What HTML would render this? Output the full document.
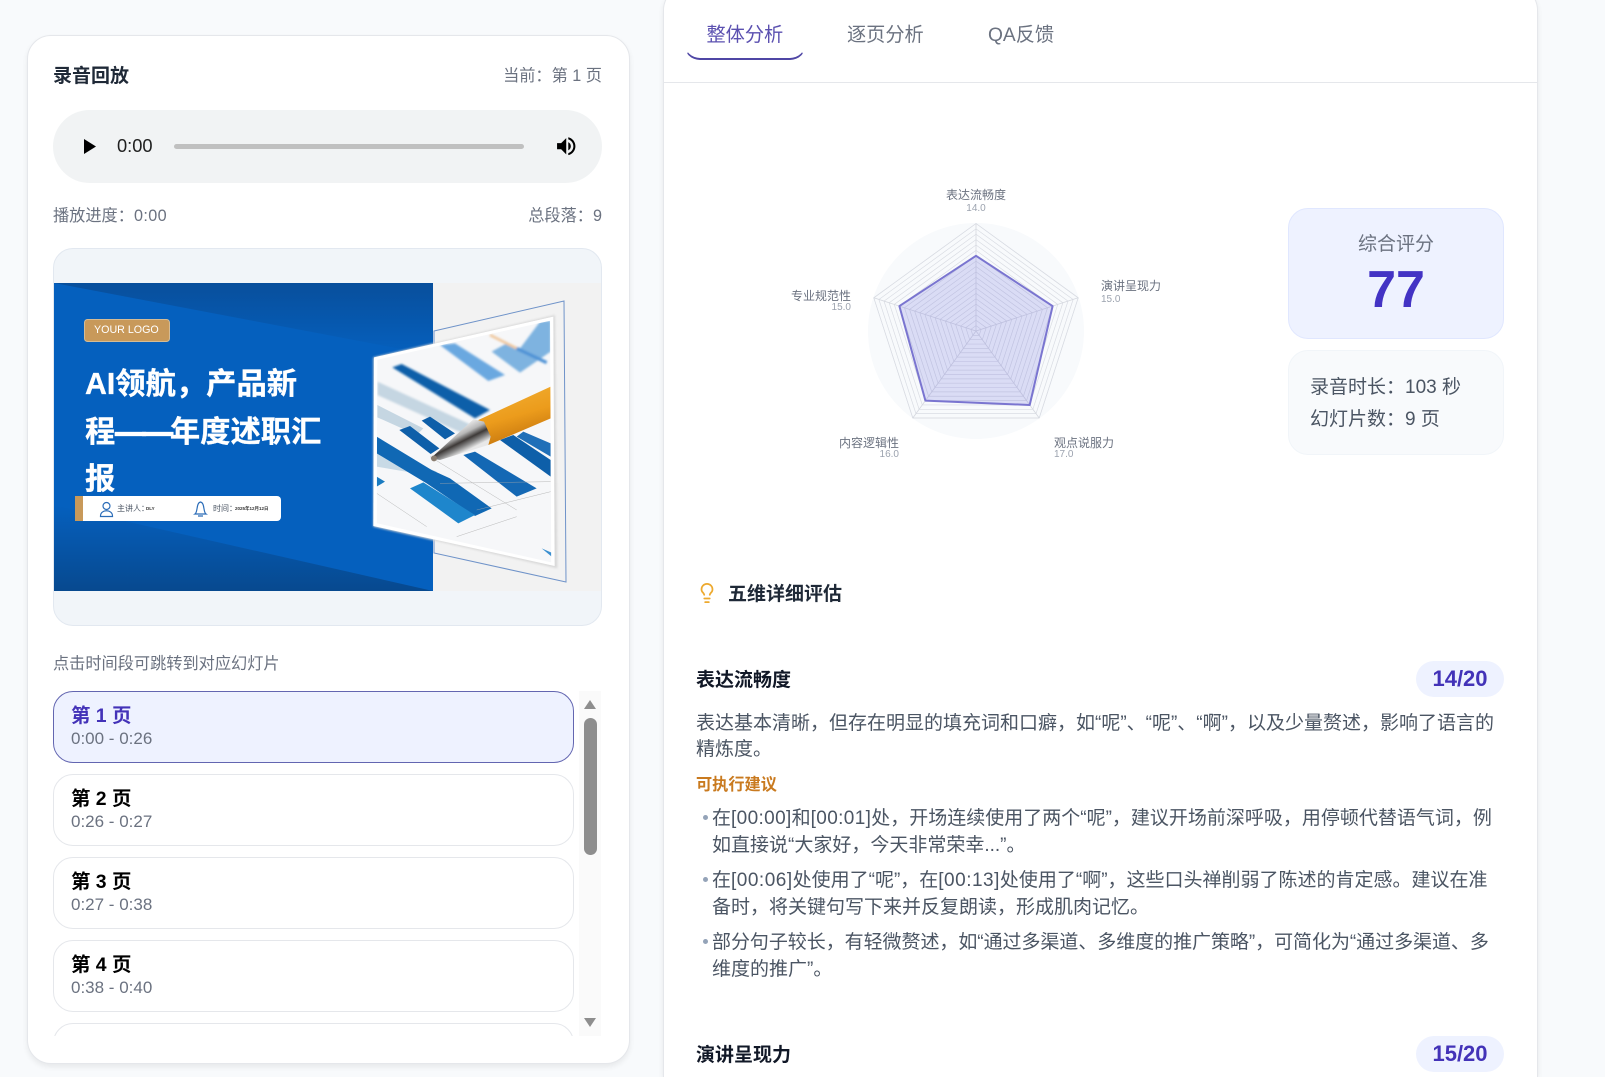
<!DOCTYPE html>
<html lang="zh"><head><meta charset="utf-8"><title>录音分析</title>
<style>
*{box-sizing:border-box}
html,body{margin:0;padding:0;width:1605px;height:1077px;overflow:hidden;background:#f8fafc;font-family:"Liberation Sans","Noto Sans CJK SC",sans-serif}
#root{position:relative;width:1605px;height:1077px;overflow:hidden}
.a{position:absolute}
.t{position:absolute;white-space:nowrap;line-height:24px;height:24px}
.card{position:absolute;background:#fff;border:1px solid #e5e7eb;box-shadow:0 3px 6px rgba(0,0,0,.07)}
.g{color:#6b7280;font-size:16.2px}
.item{position:absolute;left:53px;width:521px;height:72px;border:1px solid #e5e7eb;border-radius:20px;background:#fff}
.item b{position:absolute;left:17px;top:12px;font-size:19.4px;line-height:24px;color:#000;white-space:nowrap}
.item span{position:absolute;left:17px;top:35px;font-size:17px;line-height:24px;color:#6b7280;white-space:nowrap}
.p{font-size:19px;color:#4b5563}
.h{font-size:19px;font-weight:700;color:#111827}
.badge{position:absolute;left:1416px;width:88px;height:36px;border-radius:18px;background:#eef2ff;color:#4333b8;font-weight:700;font-size:22px;line-height:36px;text-align:center}
.dot{position:absolute;left:703px;width:5px;height:5px;border-radius:50%;background:#94a3b8}
</style></head><body><div id="root">

<div class="card" style="left:27px;top:35px;width:603px;height:1029px;border-radius:24px"></div>
<div class="t" style="left:53px;top:65px;font-size:19px;font-weight:700;color:#1f2937">录音回放</div>
<div class="t g" style="right:1003px;top:64px">当前&#xFF1A;第 1 页</div>

<div class="a" style="left:53px;top:110px;width:549px;height:73px;border-radius:37px;background:#f1f3f4"></div>
<svg class="a" style="left:0;top:0" width="640" height="200">
<polygon points="84,139 96,146.500 84,154" fill="#000"/>
<rect x="174" y="144" width="350" height="5" rx="2.500" fill="#c0c0c0"/>
<g transform="translate(554,134) scale(1.02)"><path fill="#000" d="M3 9v6h4l5 5V4L7 9H3zm13.5 3c0-1.77-1.02-3.29-2.5-4.03v8.05c1.48-.73 2.5-2.25 2.5-4.02zM14 3.23v2.06c2.89.86 5 3.54 5 6.71s-2.11 5.85-5 6.71v2.06c4.01-.91 7-4.49 7-8.77s-2.99-7.86-7-8.77z"/></g>
</svg>
<div class="t" style="left:117px;top:134px;font-size:18.300px;color:#1f1f1f">0:00</div>

<div class="t g" style="left:53px;top:204px">播放进度&#xFF1A;<span style="letter-spacing:.4px">0:00</span></div>
<div class="t g" style="right:1003px;top:204px">总段落&#xFF1A;9</div>

<div class="a" style="left:53px;top:248px;width:549px;height:378px;border-radius:20px;background:#f1f5f9;border:1px solid #e2e8f0;overflow:hidden">
<svg class="a" style="left:-1px;top:-1px;filter:blur(.35px)" width="549" height="378" viewBox="53 248 549 378">
<defs>
<linearGradient id="d1" x1="0" y1="0" x2="0" y2="1"><stop offset="0" stop-color="#084f9c"/><stop offset="1" stop-color="#0560be"/></linearGradient>
<linearGradient id="d2" x1="0" y1="0" x2="0" y2="1"><stop offset="0" stop-color="#0560be"/><stop offset="1" stop-color="#07498f"/></linearGradient>
<linearGradient id="pen" x1="0" y1="0" x2=".35" y2="1"><stop offset="0" stop-color="#f2b136"/><stop offset=".6" stop-color="#ec9c1c"/><stop offset="1" stop-color="#c9790f"/></linearGradient>
<linearGradient id="tip" gradientUnits="userSpaceOnUse" x1="290" y1="440" x2="325" y2="510"><stop offset="0" stop-color="#f0f0f0"/><stop offset=".35" stop-color="#b8b8b8"/><stop offset=".6" stop-color="#3e3a38"/><stop offset=".8" stop-color="#8a8a8a"/><stop offset="1" stop-color="#e8e8e8"/></linearGradient>
<clipPath id="ph"><polygon points="50,237 572,122 574,850 50,730"/></clipPath>
<filter id="bl"><feGaussianBlur stdDeviation="3"/></filter>
</defs>
<rect x="54" y="283" width="548" height="308" fill="#f2f2f2"/>
<rect x="54" y="283" width="379" height="308" fill="#0560be"/>
<polygon points="54,283 433,283 433,355" fill="url(#d1)"/>
<polygon points="54,505 433,591 54,591" fill="url(#d2)"/>
<polygon points="434,331 564,301 566,582 434,553" fill="none" stroke="#6f93c9" stroke-width="1"/>
<g transform="translate(360 280) scale(.33333)">
<polygon points="40,232 585,105 592,865 40,740" fill="#d8d8d8" filter="url(#bl)"/>
<polygon points="42,232 580,110 584,858 40,738" fill="#fff"/>
<g clip-path="url(#ph)">
<rect x="40" y="100" width="550" height="770" fill="#f6f7f9"/>
<g filter="url(#bl)">
<polygon points="395,215 440,190 480,205 540,125 572,122 572,215 480,278" fill="#7eb3e0"/>
<line x1="390" y1="165" x2="470" y2="205" stroke="#f0c9a0" stroke-width="8"/>
<line x1="470" y1="205" x2="560" y2="248" stroke="#4f93d6" stroke-width="10"/>
<polygon points="240,195 285,190 435,285 385,303" fill="#6ba8e0"/>
<polygon points="97,262 125,252 390,390 345,415" fill="#0e5fa9"/>
<polygon points="52,305 345,440 330,470 52,345" fill="#c5d6e2"/>
</g>
<polygon points="52,375 190,445 170,465 52,412" fill="#c5d6e2"/>
<polygon points="185,422 210,410 285,460 255,478" fill="#0e5fa9"/>
<polygon points="118,450 150,438 238,505 212,522" fill="#0e5fa9"/>
<polygon points="50,505 50,560 225,590 230,575" fill="#c8dae6"/>
<polygon points="50,470 215,570 270,595 395,685 345,708 200,610 50,520" fill="#1068b4"/>
<polygon points="50,590 75,605 50,620" fill="#1a7bc0"/>
<polygon points="150,625 190,607 345,705 295,730" fill="#1e86cc"/>
<polygon points="310,525 345,515 530,625 470,650" fill="#1468b4"/>
<polygon points="420,480 460,465 572,540 572,590" fill="#0e5fa9"/>
<polygon points="490,455 572,490 572,530 470,470" fill="#1f6fb8"/>
<g stroke="#a8a8a8" stroke-width="1.200" fill="none">
<line x1="210" y1="530" x2="470" y2="690"/><line x1="240" y1="610" x2="572" y2="605"/><line x1="350" y1="690" x2="572" y2="635"/>
<line x1="50" y1="640" x2="200" y2="740"/><line x1="290" y1="770" x2="470" y2="710"/>
</g>
<polygon points="545,805 575,818 575,830" fill="#3a8fd0"/>
<polygon points="355,420 572,320 572,415 385,495" fill="url(#pen)"/>
<polygon points="212,535 340,418 372,425 392,470 385,495 240,540" fill="url(#tip)"/>
<circle cx="222" cy="535" r="9" fill="#8a7d70"/>
</g>
<polygon points="48,236 574,116 578,852 46,733" fill="none" stroke="#fff" stroke-width="8"/>
</g>
<rect x="84.500" y="319.500" width="85" height="22" rx="3" fill="#c8995a" stroke="#d5bb94"/>
<polygon points="75,496 83,496 83,521 75,521" fill="#c8995a"/>
<path d="M83 496H277a4 4 0 0 1 4 4V517a4 4 0 0 1-4 4H83z" fill="#fff"/>
<g fill="none" stroke="#2a6cb8" stroke-width="1.200">
<circle cx="106.500" cy="506" r="3.500"/><path d="M100.500 516c0-7 12-7 12 0v.5h-12z"/>
<path d="M195 514c3-2 1-11 5.500-12 4.500 1 2.500 10 5.500 12zM198 516h5"/>
</g>
</svg>
<div class="t" style="left:40px;top:69px;font-size:10.700px;color:#fff">YOUR LOGO</div>
<div class="t" style="left:31px;top:112px;font-size:30.300px;font-weight:700;color:#fff;line-height:47.500px;height:auto;-webkit-text-stroke:.3px #fff">AI领航&#xFF0C;产品新<br>程<span style="letter-spacing:-3px;-webkit-text-stroke:1.200px #fff">——</span>年度述职汇<br>报</div>
<div class="t" style="left:63px;top:248px;font-size:8px;color:#4b5563">主讲人&#xFF1A;</div>
<div class="t" style="left:92px;top:248px;font-size:4.500px;font-weight:700;color:#333">DLY</div>
<div class="t" style="left:159px;top:248px;font-size:8px;color:#4b5563">时间&#xFF1A;</div>
<div class="t" style="left:181px;top:248px;font-size:4.500px;font-weight:700;color:#333">2025年12月12日</div>
</div>

<div class="t g" style="left:53px;top:652px">点击时间段可跳转到对应幻灯片</div>

<div class="a" style="left:0;top:691px;width:579px;height:345px;overflow:hidden">
<div class="item" style="top:0;background:#eef2ff;border-color:#6366b1"><b style="color:#4332b8">第 1 页</b><span>0:00 - 0:26</span></div>
<div class="item" style="top:83px"><b>第 2 页</b><span>0:26 - 0:27</span></div>
<div class="item" style="top:166px"><b>第 3 页</b><span>0:27 - 0:38</span></div>
<div class="item" style="top:249px"><b>第 4 页</b><span>0:38 - 0:40</span></div>
<div class="item" style="top:332px"></div>
</div>
<div class="a" style="left:579px;top:691px;width:22px;height:345px;background:#fafafa"></div>
<svg class="a" style="left:579px;top:691px" width="22" height="345">
<polygon points="11,9 17,18 5,18" fill="#8e8e8e"/>
<rect x="5" y="27" width="13" height="137" rx="6.500" fill="#8e8e8e"/>
<polygon points="11,336 17,327 5,327" fill="#8e8e8e"/>
</svg>

<div class="card" style="left:663px;top:-14px;width:875px;height:1091px;border-radius:24px 24px 0 0;border-bottom:0"></div>
<div class="a" style="left:664px;top:82px;width:873px;height:1px;background:#e5e7eb"></div>
<div class="a" style="left:684px;top:20px;width:122px;height:40px;border-bottom:2px solid #4f46a5;border-radius:0 0 16px 16px;border-left:1px solid transparent;border-right:1px solid transparent"></div>
<div class="t" style="left:706.500px;top:24px;font-size:19.200px;color:#5b50b0">整体分析</div>
<div class="t" style="left:847px;top:24px;font-size:19.200px;color:#6b7280">逐页分析</div>
<div class="t" style="left:988px;top:24px;font-size:19.200px;color:#6b7280">QA反馈</div>

<svg class="a" style="left:770px;top:170px" width="410" height="300">
<defs><polygon id="r" points="0,-107.500 102.200,-33.200 63.200,87 -63.200,87 -102.200,-33.200" fill="none" stroke="#d9dce3" stroke-width=".7" vector-effect="non-scaling-stroke"/></defs>
<g transform="translate(206,161)">
<circle r="108" fill="#f8fafc"/>
<g>
<use href="#r"/><use href="#r"/><use href="#r" transform="scale(.95)"/><use href="#r" transform="scale(.9)"/><use href="#r" transform="scale(.85)"/><use href="#r" transform="scale(.8)"/><use href="#r" transform="scale(.75)"/><use href="#r" transform="scale(.7)"/><use href="#r" transform="scale(.65)"/><use href="#r" transform="scale(.6)"/><use href="#r" transform="scale(.55)"/><use href="#r" transform="scale(.5)"/><use href="#r" transform="scale(.45)"/><use href="#r" transform="scale(.4)"/><use href="#r" transform="scale(.35)"/><use href="#r" transform="scale(.3)"/><use href="#r" transform="scale(.25)"/><use href="#r" transform="scale(.2)"/><use href="#r" transform="scale(.15)"/><use href="#r" transform="scale(.1)"/><use href="#r" transform="scale(.05)"/>
</g>
<g stroke="#d5d8df" stroke-width=".8"><line x2="0" y2="-107.500"/><line x2="102.200" y2="-33.200"/><line x2="63.200" y2="87"/><line x2="-63.200" y2="87"/><line x2="-102.200" y2="-33.200"/></g>
<polygon points="0,-75.200 76.600,-24.900 53.700,74 -50.600,69.600 -76.600,-24.900" fill="rgba(99,102,220,.2)" stroke="#7a75d0" stroke-width="2" stroke-linejoin="round"/>
</g>
<g font-size="12" fill="#6b7280">
<text x="206" y="29" text-anchor="middle">表达流畅度</text>
<text x="331" y="120">演讲呈现力</text>
<text x="81" y="130" text-anchor="end">专业规范性</text>
<text x="129" y="277" text-anchor="end">内容逻辑性</text>
<text x="284" y="277">观点说服力</text>
</g>
<g font-size="10" fill="#9ca3af">
<text x="206" y="41" text-anchor="middle">14.0</text>
<text x="331" y="132">15.0</text>
<text x="81" y="140" text-anchor="end">15.0</text>
<text x="129" y="287" text-anchor="end">16.0</text>
<text x="284" y="287">17.0</text>
</g>
</svg>

<div class="a" style="left:1288px;top:208px;width:216px;height:131px;border-radius:20px;background:#eef2ff;border:1px solid #e0e7ff"></div>
<div class="t" style="left:1288px;width:216px;text-align:center;top:233px;font-size:19px;color:#6b7280">综合评分</div>
<div class="t" style="left:1288px;width:216px;text-align:center;top:260px;height:60px;line-height:60px;font-size:52px;font-weight:700;color:#4333c4">77</div>
<div class="a" style="left:1288px;top:350px;width:216px;height:105px;border-radius:20px;background:#f8fafc;border:1px solid #f1f5f9"></div>
<div class="t" style="left:1310px;top:376px;font-size:19px;color:#4b5563">录音时长&#xFF1A;103 秒</div>
<div class="t" style="left:1310px;top:408px;font-size:19px;color:#4b5563">幻灯片数&#xFF1A;9 页</div>

<svg class="a" style="left:696px;top:582px" width="22" height="22" viewBox="0 0 24 24" fill="none" stroke="#eda92e" stroke-width="1.900" stroke-linecap="round" stroke-linejoin="round"><path d="M15 14c.2-1 .7-1.700 1.500-2.500 1-.9 1.500-2.200 1.500-3.500A6 6 0 0 0 6 8c0 1 .2 2.200 1.500 3.500.7.7 1.300 1.500 1.500 2.500"/><path d="M9 18h6"/><path d="M10 22h4"/></svg>
<div class="t" style="left:728px;top:583px;font-size:19px;font-weight:700;color:#1f2937">五维详细评估</div>

<div class="t h" style="left:696px;top:669px">表达流畅度</div>
<div class="badge" style="top:661px">14/20</div>
<div class="t p" style="left:696px;top:712px">表达基本清晰&#xFF0C;但存在明显的填充词和口癖&#xFF0C;如“呢”、“呢”、“啊”&#xFF0C;以及少量赘述&#xFF0C;影响了语言的</div>
<div class="t p" style="left:696px;top:738px">精炼度。</div>
<div class="t" style="left:696px;top:773px;font-size:16.200px;font-weight:700;color:#c97a1f">可执行建议</div>

<div class="dot" style="top:815px"></div>
<div class="t p" style="left:712px;top:807px">在<span style="letter-spacing:.36px">[00:00]</span>和<span style="letter-spacing:.36px">[00:01]</span>处&#xFF0C;开场连续使用了两个“呢”&#xFF0C;建议开场前深呼吸&#xFF0C;用停顿代替语气词&#xFF0C;例</div>
<div class="t p" style="left:712px;top:834px">如直接说“大家好&#xFF0C;今天非常荣幸...”。</div>
<div class="dot" style="top:877px"></div>
<div class="t p" style="left:712px;top:869px">在<span style="letter-spacing:.5px">[00:06]</span>处使用了“呢”&#xFF0C;在<span style="letter-spacing:.5px">[00:13]</span>处使用了“啊”&#xFF0C;这些口头禅削弱了陈述的肯定感。建议在准</div>
<div class="t p" style="left:712px;top:896px">备时&#xFF0C;将关键句写下来并反复朗读&#xFF0C;形成肌肉记忆。</div>
<div class="dot" style="top:939px"></div>
<div class="t p" style="left:712px;top:931px;letter-spacing:-.05px">部分句子较长&#xFF0C;有轻微赘述&#xFF0C;如“通过多渠道、多维度的推广策略”&#xFF0C;可简化为“通过多渠道、多</div>
<div class="t p" style="left:712px;top:958px">维度的推广”。</div>

<div class="t h" style="left:696px;top:1044px">演讲呈现力</div>
<div class="badge" style="top:1036px">15/20</div>
</div></body></html>
